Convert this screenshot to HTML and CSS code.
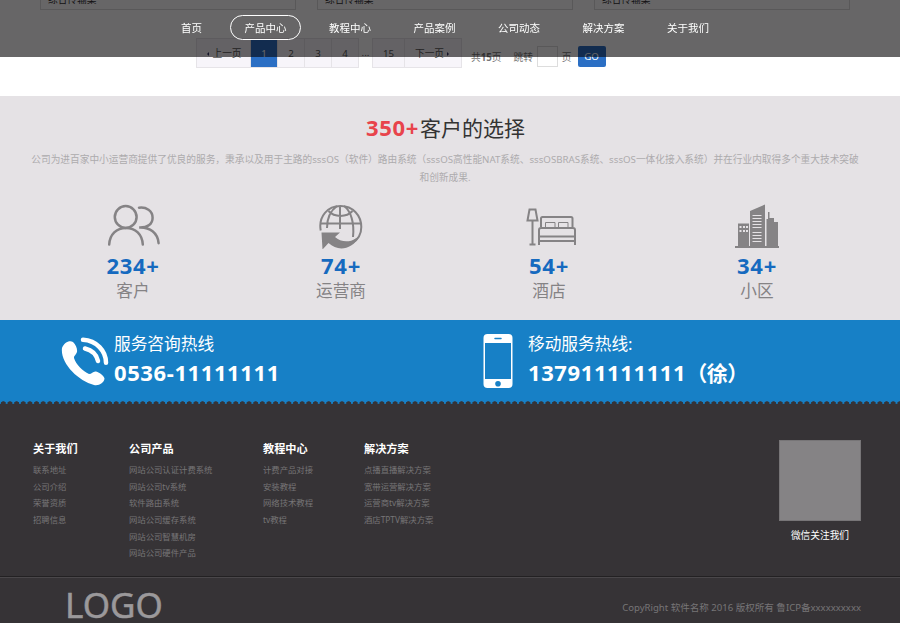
FILE: index.html
```html
<!DOCTYPE html>
<html lang="zh-CN">
<head>
    <meta charset="UTF-8">
    <meta name="viewport" content="width=device-width, initial-scale=1.0">
    <title>产品中心</title>
    <link rel="stylesheet" href="styles.css">
</head>
<body>

<nav class="navbar">
    <a href="#">首页</a>
    <a href="#" class="active">产品中心</a>
    <a href="#">教程中心</a>
    <a href="#">产品案例</a>
    <a href="#">公司动态</a>
    <a href="#">解决方案</a>
    <a href="#">关于我们</a>
</nav>

<div class="products">
    <div class="product"><span>综合传输案</span></div>
    <div class="product"><span>综合传输案</span></div>
    <div class="product"><span>综合传输案</span></div>
</div>

<div class="pagination">
    <div class="pages">
        <a href="#" class="prev"><i class="arrow-left"></i>上一页</a>
        <a href="#" class="current">1</a>
        <a href="#">2</a>
        <a href="#">3</a>
        <a href="#">4</a>
    </div>
    <span class="dots">...</span>
    <div class="pages">
        <a href="#" class="last">15</a>
        <a href="#" class="next">下一页<i class="arrow-right"></i></a>
    </div>
    <div class="jump">
        <span class="total">共<b>15</b>页</span>
        <span>跳转</span>
        <input type="text" class="jump-input">
        <span>页</span>
        <button type="button" class="go-btn">GO</button>
    </div>
</div>

<section class="choice">
    <h2><b>350+</b>客户的选择</h2>
    <p class="intro">
        <span>公司为进百家中小运营商提供了优良的服务，秉承以及用于主路的sssOS（软件）路由系统（sssOS高性能NAT系统、sssOSBRAS系统、sssOS一体化接入系统）并在行业内取得多个重大技术突破</span><br>
        <span>和创新成果.</span>
    </p>
    <div class="stats">
        <div class="stat">
            <svg width="54" height="46" viewBox="0 0 54 46" fill="none" stroke="#858385" stroke-width="2.5" stroke-linecap="round">
                <circle cx="19.7" cy="14" r="10.9"/>
                <path d="M3.2 41.5C3.8 31.5 10.5 24.9 20 24.9S36.2 31.5 36.8 41.5"/>
                <path d="M33 4.7c7.2-1 13.6 3 13.6 10 0 6-4.6 10.2-13.4 9.9 10.6-.6 18.6 5.4 19.4 15.6"/>
            </svg>
            <b>234+</b>
            <span>客户</span>
        </div>
        <div class="stat">
            <svg width="44" height="46" viewBox="0 0 44 46" fill="none" stroke="#858385" stroke-width="2">
                <path d="M1.7 27.5C-.8 13 9 3 21.5 3S42.3 12.5 42.3 24c0 8-4 13-9 16"/>
                <path d="M21 3v23M2 20.5h40M8 25c0-9 3-17 10-22M25 3c7 5 10.5 17 9 31M9.5 8c6 6.5 18 6.5 24 0"/>
                <path d="M2.5 29.5h18.5l-5 4.5c5 5 14.5 6 20.5 1.500l3.500-1.500C33 46.500 19 49 9.500 40l-6 6.500z" fill="#858385" stroke="none"/>
            </svg>
            <b>74+</b>
            <span>运营商</span>
        </div>
        <div class="stat">
            <svg class="bed-icon" width="50" height="46" viewBox="0 0 50 46" fill="none" stroke="#858385" stroke-width="2">
                <path d="M3.500 6.500h6l2 11H1.500zM6.500 18v23.500M3.500 41.600h6"/>
                <path d="M15 24V15.500q0-1.500 1.500-1.500h28.500q1.500 0 1.500 1.500V24M13 42V27q0-2 2-2h32q2 0 2 2v15M13 33.500h36M13 38h36"/>
                <path d="M19.500 24v-4.500h9.500V24M32.500 24v-4.500H42V24" stroke-width="1"/>
            </svg>
            <b>54+</b>
            <span>酒店</span>
        </div>
        <div class="stat">
            <svg width="44" height="46" viewBox="0 0 44 46">
                <path d="M0 43h3V20.500h11V43h1V8L30 1.500V43h1.500V16h1.500V9h1.500v6h4.500v4h4v24h1v2H0z" fill="#858385"/>
                <path d="M4.500 23h2v2h-2zm3.500 0h2v2H8zm3 0h2v2h-2zm-6.500 4h2v2h-2zM8 27h2v2H8zm3 0h2v2h-2zM17.500 12h9v1h-9zm0 3h9v1h-9zm0 3h9v1h-9zm0 3h9v1h-9zm0 3h9v1h-9zm0 5h9v1h-9zm0 3h9v1h-9zm0 3h9v1h-9zm0 3h9v1h-9z" fill="#e5e2e5"/>
            </svg>
            <b>34+</b>
            <span>小区</span>
        </div>
    </div>
</section>

<section class="hotline">
    <div class="line">
        <svg class="phone-icon" width="48" height="50" viewBox="0 0 48 50">
            <path d="M1 11C3 6 8 3 12 5c3 3 4.500 7 4 10-1 3-3.500 4-3 6 2 7 9 13 15 16 3 0 4-3 7-2.500 4 1 8 4.500 8.500 7C43 46 38 49 33 48 17 44-1 26 1 11z" fill="#fff"/>
            <path d="M24 11.500c6.500 1.500 11.500 6 13 12.500M22 2.800c13.500.7 23 11.200 23 23" fill="none" stroke="#fff" stroke-width="4.500" stroke-linecap="round"/>
        </svg>
        <div class="line-text">
            <span>服务咨询热线</span>
            <b>0536-11111111</b>
        </div>
    </div>
    <div class="line">
        <svg class="mobile-icon" width="30" height="56" viewBox="0 0 30 56">
            <rect x="0.500" y="1" width="29" height="54" rx="4" fill="#fff"/>
            <path d="M2 10h26v36H2z" fill="#1780c6"/>
            <circle cx="15" cy="50.800" r="2.800" fill="#1780c6"/>
            <path d="M12 5.500h6" stroke="#1780c6" stroke-width="1.500" stroke-linecap="round"/>
        </svg>
        <div class="line-text">
            <span>移动服务热线:</span>
            <b>137911111111<i class="contact" lang="zh-TW">（徐）</i></b>
        </div>
    </div>
</section>

<footer class="footer">
    <div class="footer-top">
        <div class="links about">
            <h3>关于我们</h3>
            <a href="#">联系地址</a>
            <a href="#">公司介绍</a>
            <a href="#">荣誉资质</a>
            <a href="#">招聘信息</a>
        </div>
        <div class="links company">
            <h3>公司产品</h3>
            <a href="#">网站公司认证计费系统</a>
            <a href="#">网站公司tv系统</a>
            <a href="#">软件路由系统</a>
            <a href="#">网站公司缓存系统</a>
            <a href="#">网站公司智慧机房</a>
            <a href="#">网站公司硬件产品</a>
        </div>
        <div class="links course">
            <h3>教程中心</h3>
            <a href="#">计费产品对接</a>
            <a href="#">安装教程</a>
            <a href="#">网络技术教程</a>
            <a href="#">tv教程</a>
        </div>
        <div class="links">
            <h3>解决方案</h3>
            <a href="#">点播直播解决方案</a>
            <a href="#">宽带运营解决方案</a>
            <a href="#">运营商tv解决方案</a>
            <a href="#">酒店TPTV解决方案</a>
        </div>
        <div class="wechat">
            <div class="qrcode"></div>
            <span>微信关注我们</span>
        </div>
    </div>
    <div class="footer-bottom">
        <div class="logo">LOGO</div>
        <div class="copyright">CopyRight 软件名称 2016 版权所有 鲁ICP备xxxxxxxxxx</div>
    </div>
</footer>

</body>
</html>
```
FILE: styles.css
```css
* {
    box-sizing: border-box;
}

body {
    margin: 0;
    height: 623px;
    overflow: hidden;
    background-color: #fff;
    font-family: "Noto Sans", "Noto Sans CJK SC", sans-serif;
    font-size: 9.7px;
    color: #333;
}

a {
    color: inherit;
    text-decoration: none;
}

h2,
h3,
p {
    margin: 0;
}

/* nav */
.navbar {
    position: fixed;
    top: 0;
    left: 0;
    z-index: 10;
    width: 100%;
    height: 57px;
    padding: 15px 0 0 166.5px;
    display: flex;
    align-items: flex-start;
    gap: 13.5px;
    background-color: rgba(2, 0, 2, 0.6);
}

.navbar a {
    height: 25px;
    padding: 0 13.5px;
    border: 1px solid transparent;
    border-radius: 13px;
    font-size: 10.5px;
    line-height: 24px;
    color: #fff;
}

.navbar .active {
    border-color: #fff;
}

/* products */
.products {
    display: grid;
    grid-template-columns: repeat(3, 256px);
    gap: 21px;
    height: 10px;
    padding-left: 40px;
}

.product {
    display: flex;
    align-items: flex-end;
    height: 10px;
    padding: 0 7px 2px;
    border: 1px solid #ddd;
    border-top: none;
    line-height: 14px;
}

/* pagination */
.pagination {
    display: flex;
    height: 86px;
    padding: 28px 0 0 196px;
    color: #555;
}

.pages {
    display: flex;
    height: 30px;
    border: 1px solid #e6e4e8;
    background-color: #f7f5fa;
}

.pages a {
    width: 27px;
    border-right: 1px solid #e6e4e8;
    line-height: 29px;
    text-align: center;
}

.pages a:last-child {
    width: 26px;
    border-right: none;
}

.pages .prev {
    width: 54px;
}

.pages .current {
    background-color: #2b6fc4;
    color: #fff;
}

.pages .last {
    width: 32px;
}

.pages .next:last-child {
    width: 56px;
}

.arrow-left,
.arrow-right {
    display: inline-block;
    border: 2.5px solid transparent;
    vertical-align: 1px;
}

.arrow-left {
    border-right-color: #336;
    margin-right: 3px;
}

.arrow-right {
    border-left-color: #336;
    margin-left: 3px;
}

.dots {
    width: 13px;
    line-height: 29px;
    text-align: center;
}

.jump {
    display: flex;
    align-items: center;
    height: 21px;
    margin: 8px 0 0 9px;
    color: #777;
}

.total {
    margin-right: 12px;
}

.jump-input {
    width: 21px;
    height: 21px;
    margin: 0 4px;
    padding: 0;
    border: 1px solid #ddd;
    background-color: #fff;
}

.go-btn {
    width: 28px;
    height: 21px;
    margin-left: 6px;
    padding: 0;
    border: none;
    border-radius: 2px;
    background-color: #2b6fc4;
    font-family: inherit;
    font-size: 9.7px;
    color: #fff;
}

/* customers */
.choice {
    height: 224px;
    padding-top: 16px;
    background-color: #e5e2e5;
    text-align: center;
}

.choice h2 {
    padding-right: 9px;
    font-size: 21px;
    font-weight: normal;
    line-height: 30px;
}

.choice h2 b {
    margin-right: 1px;
    font-size: 22px;
    letter-spacing: 0.7px;
    color: #e8444c;
}

.intro {
    height: 60px;
    padding: 8px 10px 0 0;
    line-height: 18px;
    color: #adabad;
    white-space: nowrap;
}

.stats {
    display: grid;
    grid-template-columns: repeat(4, 208px);
    padding-left: 29px;
}

.stat {
    display: flex;
    flex-direction: column;
    align-items: center;
}

.bed-icon {
    margin-left: 4px;
}

.stat b {
    margin-top: 1px;
    font-size: 22px;
    letter-spacing: 0.7px;
    line-height: 30px;
    color: #166abf;
}

.stat span {
    font-size: 16.7px;
    line-height: 21px;
    color: #858385;
}

/* hotline */
.hotline {
    display: grid;
    grid-template-columns: 422px 1fr;
    height: 81px;
    padding-left: 61px;
    background-color: #1780c6;
    color: #fff;
}

.line {
    display: flex;
}

.phone-icon {
    margin: 17px 5px 0 0;
}

.mobile-icon {
    margin: 13px 15px 0 0;
}

.line-text {
    display: flex;
    flex-direction: column;
    padding-top: 11px;
}

.line-text span {
    font-size: 16.7px;
    line-height: 25px;
}

.line-text b {
    font-size: 22px;
    letter-spacing: 0.6px;
    line-height: 33px;
    white-space: nowrap;
}

.contact {
    font-family: "Noto Sans CJK TC", sans-serif;
    font-size: 21px;
    font-style: normal;
    letter-spacing: -0.5px;
    line-height: 1;
}

/* footer */
.footer {
    height: 222px;
    background-color: #363336;
}

.footer::before {
    content: "";
    display: block;
    height: 3px;
    background: radial-gradient(circle at 50% 100%, #363336 2.4px, #1780c6 3px) 0 0 / 6.65px 3px;
}

.footer-top {
    display: flex;
    height: 173px;
    padding: 36px 39px 0 33px;
    border-bottom: 1px solid #232123;
}

.links {
    display: flex;
    flex-direction: column;
    font-size: 8.35px;
    line-height: 16.65px;
    color: #777577;
}

.links h3 {
    margin-bottom: 5px;
    font-size: 11.15px;
    line-height: 17px;
    color: #fff;
}

.about {
    width: 96px;
}

.company {
    width: 134px;
}

.course {
    width: 101px;
}

.wechat {
    margin-left: auto;
    width: 82px;
    text-align: center;
    line-height: 30px;
    color: #fff;
}

.qrcode {
    height: 81px;
    border: 1px solid #777577;
    background-color: #858385;
}

.footer-bottom {
    display: flex;
    justify-content: space-between;
    height: 46px;
    padding: 0 39px 0 65px;
    border-top: 1px solid #4a474a;
}

.logo {
    font-size: 35px;
    line-height: 54px;
    color: #9b999b;
    -webkit-text-stroke: 0.5px #9b999b;
}

.copyright {
    font-size: 9.55px;
    line-height: 60px;
    color: #777577;
}
```
